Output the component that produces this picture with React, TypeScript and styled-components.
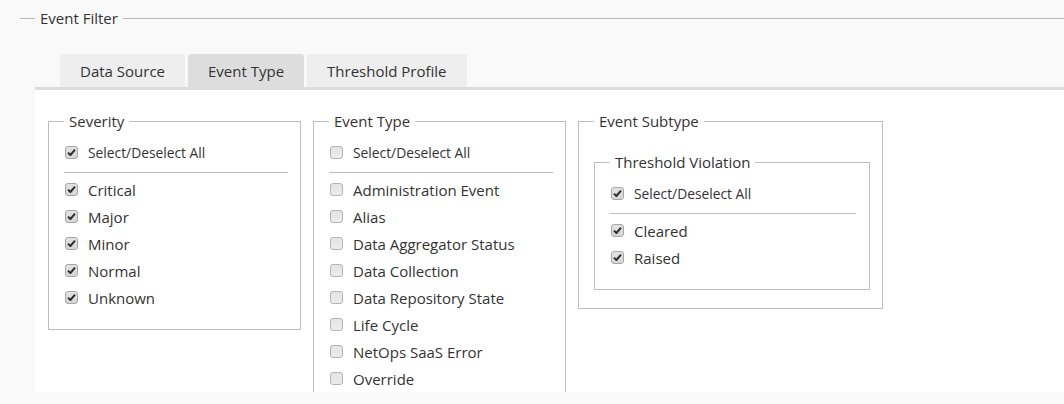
import React from "react";
import styled, { createGlobalStyle } from "styled-components";

const Global = createGlobalStyle`
  html, body { margin: 0; padding: 0; background: #f9f9f9; }
  body { font-family: "Open Sans", "Liberation Sans", sans-serif; color: #333; overflow: hidden; }
  #root { width: 1064px; height: 404px; overflow: hidden; }
`;

const Page = styled.div`
  padding: 8px 0 0 20px;
`;

const OuterFieldset = styled.fieldset`
  margin: 0;
  border: none;
  border-top: 1px solid #b8b8b8;
  padding: 26px 0 0 15px;
  min-width: 0;
`;

const Legend = styled.legend`
  padding: 0 5px;
  font-size: 15px;
  line-height: 20px;
  color: #333;
`;

const TabBar = styled.div`
  display: flex;
  align-items: flex-end;
  gap: 3px;
  padding-left: 25px;
  border-bottom: 3px solid #dddddd;
  width: 1200px;
`;

const Tab = styled.div<{ $active?: boolean }>`
  height: 33px;
  padding: 0 20px;
  display: flex;
  align-items: center;
  font-size: 15px;
  color: #333;
  background: ${(p) => (p.$active ? "#dddddd" : "#eeeeee")};
  border-radius: 3px 3px 0 0;
`;

const Panel = styled.div`
  background: #ffffff;
  height: 302px;
  width: 1200px;
  overflow: hidden;
  display: flex;
  align-items: flex-start;
  gap: 12px;
  padding: 21px 13px 0;
  box-sizing: border-box;
`;

const Group = styled.fieldset<{ $width?: number; $nested?: boolean }>`
  box-sizing: border-box;
  width: ${(p) => (p.$width ? `${p.$width}px` : "auto")};
  margin: ${(p) => (p.$nested ? "13px 0 0" : "0")};
  border: 1px solid #bdbdbd;
  padding: 8px ${(p) => (p.$nested ? 13 : 12)}px 18px 15px;
  min-width: 0;
  flex: none;
`;

const GroupLegend = styled.legend`
  padding: 0 5px;
  font-size: 15px;
  line-height: 20px;
  color: #333;
`;

const Row = styled.label<{ $small?: boolean }>`
  display: flex;
  align-items: center;
  height: 27px;
  font-size: ${(p) => (p.$small ? "13.8px" : "15px")};
  color: #333;
  white-space: nowrap;
`;

const Box = styled.span<{ $checked?: boolean }>`
  box-sizing: border-box;
  width: 13px;
  height: 13px;
  margin: 0 10px 0 1px;
  border: 1px solid ${(p) => (p.$checked ? "#a6a6a6" : "#b4b4b4")};
  border-radius: 3px;
  background: ${(p) =>
    p.$checked
      ? "linear-gradient(#e2e2e2, #d6d6d6)"
      : "linear-gradient(#e4e4e4, #ececec)"};
  display: inline-flex;
  align-items: center;
  justify-content: center;
  flex: none;
`;

const Separator = styled.div`
  height: 1px;
  background: #bdbdbd;
  margin: 6px 0 3px;
`;

const Check = () => (
  <svg width="9" height="9" viewBox="0 0 9 9">
    <path d="M1 4.6 L3.4 7 L8 1.6" fill="none" stroke="#2e2e2e" strokeWidth="2" strokeLinejoin="round" />
  </svg>
);

const Item = ({ label, checked, small }: { label: string; checked?: boolean; small?: boolean }) => (
  <Row $small={small}>
    <Box $checked={checked}>{checked ? <Check /> : null}</Box>
    {label}
  </Row>
);

const CheckGroup = ({ items, checked }: { items: string[]; checked: boolean }) => (
  <>
    <Item label="Select/Deselect All" checked={checked} small />
    <Separator />
    {items.map((i) => (
      <Item key={i} label={i} checked={checked} />
    ))}
  </>
);

export default function App() {
  return (
    <>
      <Global />
      <Page>
        <OuterFieldset>
          <Legend>Event Filter</Legend>
          <TabBar>
            <Tab>Data Source</Tab>
            <Tab $active>Event Type</Tab>
            <Tab>Threshold Profile</Tab>
          </TabBar>
          <Panel>
            <Group $width={253}>
              <GroupLegend>Severity</GroupLegend>
              <CheckGroup checked items={["Critical", "Major", "Minor", "Normal", "Unknown"]} />
            </Group>
            <Group $width={253}>
              <GroupLegend>Event Type</GroupLegend>
              <CheckGroup
                checked={false}
                items={[
                  "Administration Event",
                  "Alias",
                  "Data Aggregator Status",
                  "Data Collection",
                  "Data Repository State",
                  "Life Cycle",
                  "NetOps SaaS Error",
                  "Override",
                ]}
              />
            </Group>
            <Group $width={305}>
              <GroupLegend>Event Subtype</GroupLegend>
              <Group $nested>
                <GroupLegend>Threshold Violation</GroupLegend>
                <CheckGroup checked items={["Cleared", "Raised"]} />
              </Group>
            </Group>
          </Panel>
        </OuterFieldset>
      </Page>
    </>
  );
}
